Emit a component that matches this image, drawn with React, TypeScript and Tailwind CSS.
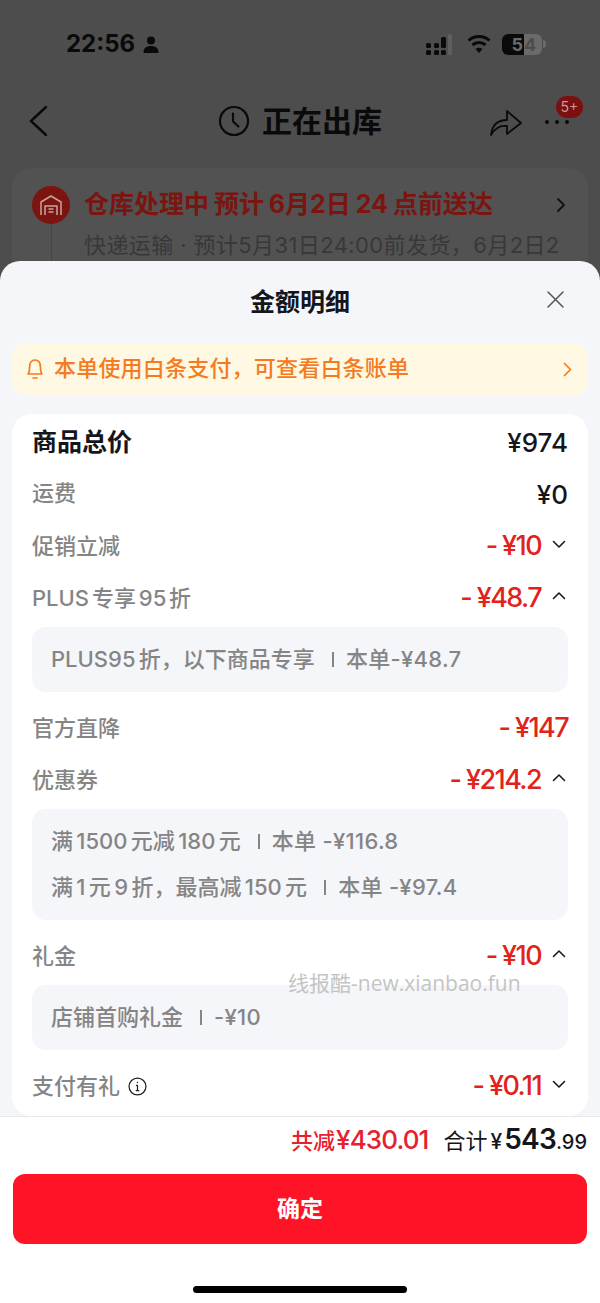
import React from "react";

const ChevronDown = () => (
  <svg className="w-[14px] h-[14px] ml-[11px] mr-[2px] mb-[4px]" viewBox="0 0 14 14" fill="none" stroke="#1a1a1a" strokeWidth="1.6" strokeLinecap="round" strokeLinejoin="round">
    <path d="M1.500 4.500l5.500 5.500 5.500-5.500" />
  </svg>
);

const ChevronUp = () => (
  <svg className="w-[14px] h-[14px] ml-[11px] mr-[2px] mb-[4px]" viewBox="0 0 14 14" fill="none" stroke="#1a1a1a" strokeWidth="1.6" strokeLinecap="round" strokeLinejoin="round">
    <path d="M1.500 9.500l5.500-5.500 5.500 5.500" />
  </svg>
);

interface RowProps {
  label: React.ReactNode;
  value: string;
  arrow?: "up" | "down";
}

const Row: React.FC<RowProps> = ({ label, value, arrow }) => (
  <div className="flex items-center justify-between h-[52px]">
    <div className="flex items-center text-[22px] font-medium text-[#858585] [word-spacing:-3px]">{label}</div>
    <div className="flex items-center">
      <span className="text-[27px] font-medium tracking-[-1.6px] text-[#e2231a]">{value}</span>
      {arrow === "up" && <ChevronUp />}
      {arrow === "down" && <ChevronDown />}
    </div>
  </div>
);

interface DetailLine {
  left: string;
  right: string;
}

const Detail: React.FC<{ lines: DetailLine[] }> = ({ lines }) => (
  <div className="mt-[3px] mb-[10px] rounded-[14px] bg-[#f5f6fa] py-[9.5px] px-[19px] text-[22px] font-medium text-[#858585]">
    {lines.map((line) => (
      <div key={line.left} className="h-[46px] flex items-center">
        <span className="[word-spacing:-2.5px]">{line.left}</span>
        <span className="w-[2px] h-[15px] ml-[17px] mr-[12px] bg-[#858585]" />
        <span className="tracking-[0.3px]">{line.right}</span>
      </div>
    ))}
  </div>
);

const StatusBar = () => (
  <div className="flex items-center justify-between h-[32px] mt-[28px] pl-[66px] pr-[54px]">
    <div className="flex items-center gap-[8px]">
      <span className="text-[24px] font-bold text-[#0a0a0a]">22:56</span>
      <svg className="w-[16px] h-[17px]" viewBox="0 0 16 17" fill="#0a0a0a">
        <circle cx="8" cy="4.5" r="4" />
        <path d="M0.5 16c0-4 3.2-6 7.5-6s7.5 2 7.5 6c0 .6-.4 1-1 1h-13c-.6 0-1-.4-1-1z" />
      </svg>
    </div>
    <div className="flex items-center">
      <svg className="w-[27px] h-[22px]" viewBox="0 0 27 22" fill="#0a0a0a">
        <rect x="1" y="10" width="5" height="5" rx="1.5" />
        <rect x="1" y="17" width="5" height="5" rx="1.5" />
        <rect x="9" y="10" width="5" height="5" rx="1.5" />
        <rect x="9" y="17" width="5" height="5" rx="1.5" />
        <rect x="16" y="4" width="5" height="11" rx="1.5" />
        <rect x="16" y="17" width="5" height="5" rx="1.5" />
        <rect x="23" y="1" width="4" height="21" rx="1.5" fill="#5f5f5f" />
      </svg>
      <svg className="w-[24px] h-[20px] ml-[15px]" viewBox="0 0 24 20" fill="none" stroke="#0a0a0a" strokeWidth="3">
        <path d="M1.5 6.5c6-5.300 15-5.300 21 0" />
        <path d="M5.500 11c3.700-3.200 9.300-3.200 13 0" />
        <path d="M12 19l-3.500-4c2-1.600 5-1.600 7 0z" fill="#0a0a0a" stroke="none" />
      </svg>
      <div className="relative flex items-center ml-[11px]">
        <div className="flex w-[40px] h-[21px] rounded-[6px] overflow-hidden bg-[#6a6a6a] text-[18px] font-bold leading-[21px]">
          <div className="w-[22px] bg-[#0a0a0a] text-[#6a6a6a] text-right pr-[1px]">5</div>
          <div className="text-[#4d4d4d]">4</div>
        </div>
        <div className="w-[3px] h-[8px] ml-[1px] rounded-r-sm bg-[#6a6a6a]" />
      </div>
    </div>
  </div>
);

const NavBar = () => (
  <div className="relative flex items-center justify-center h-[60px] mt-[31px]">
    <svg className="absolute left-[28px] top-[14px] w-[20px] h-[32px]" viewBox="0 0 20 32" fill="none" stroke="#0a0a0a" strokeWidth="2.400" strokeLinecap="round" strokeLinejoin="round">
      <path d="M18 2L3 16l15 14" />
    </svg>
    <svg className="w-[32px] h-[32px] mr-[12px]" viewBox="0 0 32 32" fill="none" stroke="#0a0a0a" strokeWidth="2.200" strokeLinecap="round" strokeLinejoin="round">
      <circle cx="16" cy="16" r="14" />
      <path d="M15 8.500v8l5.500 5" />
    </svg>
    <span className="text-[30px] font-bold text-[#0a0a0a] leading-none">正在出库</span>
    <svg className="absolute left-[489px] top-[14px] w-[34px] h-[32px]" viewBox="0 0 34 32" fill="none" stroke="#0a0a0a" strokeWidth="1.800" strokeLinejoin="round" strokeLinecap="round">
      <path d="M2 30c1-9 6-15 16-15V6l14 12-14 11v-8c-7-1-12 2-16 9z" />
    </svg>
    <div className="absolute left-[545px] top-[29px] flex gap-[6px]">
      <span className="w-[4px] h-[4px] rounded-full bg-[#0a0a0a]" />
      <span className="w-[4px] h-[4px] rounded-full bg-[#0a0a0a]" />
      <span className="w-[4px] h-[4px] rounded-full bg-[#0a0a0a]" />
    </div>
    <div className="absolute left-[556px] top-[5px] w-[27px] h-[22px] flex items-center justify-center rounded-[11px] bg-[#7c0f0f] text-[14px] text-[#c99] leading-none">
      5+
    </div>
  </div>
);

const OrderCard = () => (
  <div className="relative mx-[12px] mt-[17px] h-[200px] rounded-[20px] bg-[#525252] pt-[18px] pl-[20px] pr-[22px]">
    <div className="flex items-center h-[38px]">
      <div className="w-[38px] h-[38px] flex items-center justify-center rounded-full bg-[#7c1410] shrink-0">
        <svg className="w-[24px] h-[22px]" viewBox="0 0 24 22" fill="none" stroke="#c9a3a0" strokeWidth="1.500" strokeLinejoin="round">
          <path d="M2 21V8l10-6 10 6v13" />
          <path d="M6 21v-9h12v9" />
          <path d="M9.500 15h5M9.500 18h5" />
        </svg>
      </div>
      <span className="ml-[14px] text-[25px] font-bold text-[#7c1410] whitespace-nowrap [word-spacing:-1px]">仓库处理中 预计 6月2日 24 点前送达</span>
      <svg className="ml-auto w-[10px] h-[16px]" viewBox="0 0 10 16" fill="none" stroke="#111" strokeWidth="1.800" strokeLinecap="round" strokeLinejoin="round">
        <path d="M2 2l6 6-6 6" />
      </svg>
    </div>
    <div className="absolute left-[39px] top-[56px] w-[1px] h-[144px] bg-[#454545]" />
    <div className="ml-[52px] mt-[5px] text-[22px] text-[#383838] whitespace-nowrap overflow-hidden tracking-[0.4px]">
      快递运输 · 预计5月31日24:00前发货，6月2日2
    </div>
  </div>
);

const SheetHeader = () => (
  <div className="relative flex items-center justify-center h-[82px]">
    <span className="text-[25px] font-bold text-[#14161c] leading-none">金额明细</span>
    <svg className="absolute left-[546px] top-[29px] w-[19px] h-[19px]" viewBox="0 0 19 19" fill="none" stroke="#555" strokeWidth="1.500" strokeLinecap="round">
      <path d="M2 2l15 15M17 2L2 17" />
    </svg>
  </div>
);

const Notice = () => (
  <div className="flex items-center h-[52px] mx-[12px] rounded-[14px] bg-[#fff8e3] pl-[14px] pr-[16px]">
    <svg className="w-[18px] h-[24px]" viewBox="0 0 18 24" fill="none" stroke="#f47b20" strokeWidth="1.700" strokeLinecap="round" strokeLinejoin="round">
      <path d="M2 17c1.500-1.500 1.500-3 1.500-6.500C3.500 6 5.500 3 9 3s5.500 3 5.500 7.500c0 3.500 0 5 1.500 6.500z" />
      <path d="M7 21h4" />
    </svg>
    <span className="ml-[10px] mb-[2px] text-[22px] font-medium text-[#f47b20] leading-none tracking-[0.2px]">本单使用白条支付，可查看白条账单</span>
    <svg className="ml-auto w-[9px] h-[15px]" viewBox="0 0 9 15" fill="none" stroke="#f47b20" strokeWidth="1.700" strokeLinecap="round" strokeLinejoin="round">
      <path d="M1.500 1.500l6 6-6 6" />
    </svg>
  </div>
);

const Breakdown = () => (
  <div className="mx-[12px] mt-[19px] rounded-[20px] bg-white px-[20px] pt-[3px] pb-[4px]">
    <div className="flex items-center justify-between h-[51px]">
      <span className="text-[25px] font-bold text-[#14161c]">商品总价</span>
      <span className="text-[26px] font-medium text-[#14161c]">¥974</span>
    </div>
    <div className="flex items-center justify-between h-[52px]">
      <span className="mb-[2px] text-[22px] font-medium text-[#858585]">运费</span>
      <span className="text-[26px] font-medium text-[#14161c]">¥0</span>
    </div>
    <Row label="促销立减" value="- ¥10" arrow="down" />
    <Row label="PLUS 专享 95 折" value="- ¥48.7" arrow="up" />
    <Detail lines={[{ left: "PLUS95 折，以下商品专享", right: "本单-¥48.7" }]} />
    <Row label="官方直降" value="- ¥147" />
    <Row label="优惠券" value="- ¥214.2" arrow="up" />
    <Detail
      lines={[
        { left: "满 1500 元减 180 元", right: "本单 -¥116.8" },
        { left: "满 1 元 9 折，最高减 150 元", right: "本单 -¥97.4" },
      ]}
    />
    <Row label="礼金" value="- ¥10" arrow="up" />
    <Detail lines={[{ left: "店铺首购礼金", right: "-¥10" }]} />
    <Row
      label={
        <>
          支付有礼
          <svg className="w-[19px] h-[19px] ml-[8px]" viewBox="0 0 18 18" fill="none" stroke="#222" strokeWidth="1.200" strokeLinecap="round">
            <circle cx="9" cy="9" r="8" />
            <path d="M9 8v5M7.800 13h2.400M8 8h1" />
            <circle cx="9" cy="5.200" r="0.700" fill="#222" stroke="none" />
          </svg>
        </>
      }
      value="- ¥0.11"
      arrow="down"
    />
  </div>
);

const Footer = () => (
  <div className="flex-1 bg-white border-t border-[#e8e9ed] px-[13px]">
    <div className="flex items-baseline justify-end h-[57px] pt-[1px]">
      <span className="text-[22px] font-medium text-[#e8202e]">共减</span>
      <span className="ml-[1px] text-[26px] font-medium text-[#e8202e] tracking-[-0.9px]">¥430.01</span>
      <span className="ml-[15px] text-[22px] text-[#14161c]">合计</span>
      <span className="ml-[3px] text-[21px] font-medium text-[#14161c]">¥</span>
      <span className="ml-[2px] text-[28px] font-semibold text-[#14161c] tracking-[-0.8px]">543</span>
      <span className="text-[20px] font-medium text-[#14161c]">.99</span>
    </div>
    <button className="w-full h-[70px] rounded-[12px] bg-[#ff1327] text-[23px] font-bold text-white">确定</button>
    <div className="flex justify-center mt-[42px]">
      <div className="w-[214px] h-[7px] rounded-full bg-black" />
    </div>
  </div>
);

export default function App() {
  return (
    <div className="relative flex flex-col h-[1303px] w-[600px] overflow-hidden bg-[#4d4d4d] font-['Inter','Noto_Sans_CJK_SC',sans-serif]">
      <div className="h-[261px] shrink-0 overflow-hidden">
        <StatusBar />
        <NavBar />
        <OrderCard />
      </div>
      <div className="flex flex-1 flex-col rounded-t-[20px] overflow-hidden bg-[#f5f6fa]">
        <SheetHeader />
        <Notice />
        <Breakdown />
        <Footer />
      </div>
      <div className="absolute left-[288px] top-[970px] text-[21px] leading-[26px] text-[#c4c4c4] font-['Open_Sans','Noto_Sans_CJK_SC',sans-serif]">
        线报酷-new.xianbao.fun
      </div>
    </div>
  );
}
